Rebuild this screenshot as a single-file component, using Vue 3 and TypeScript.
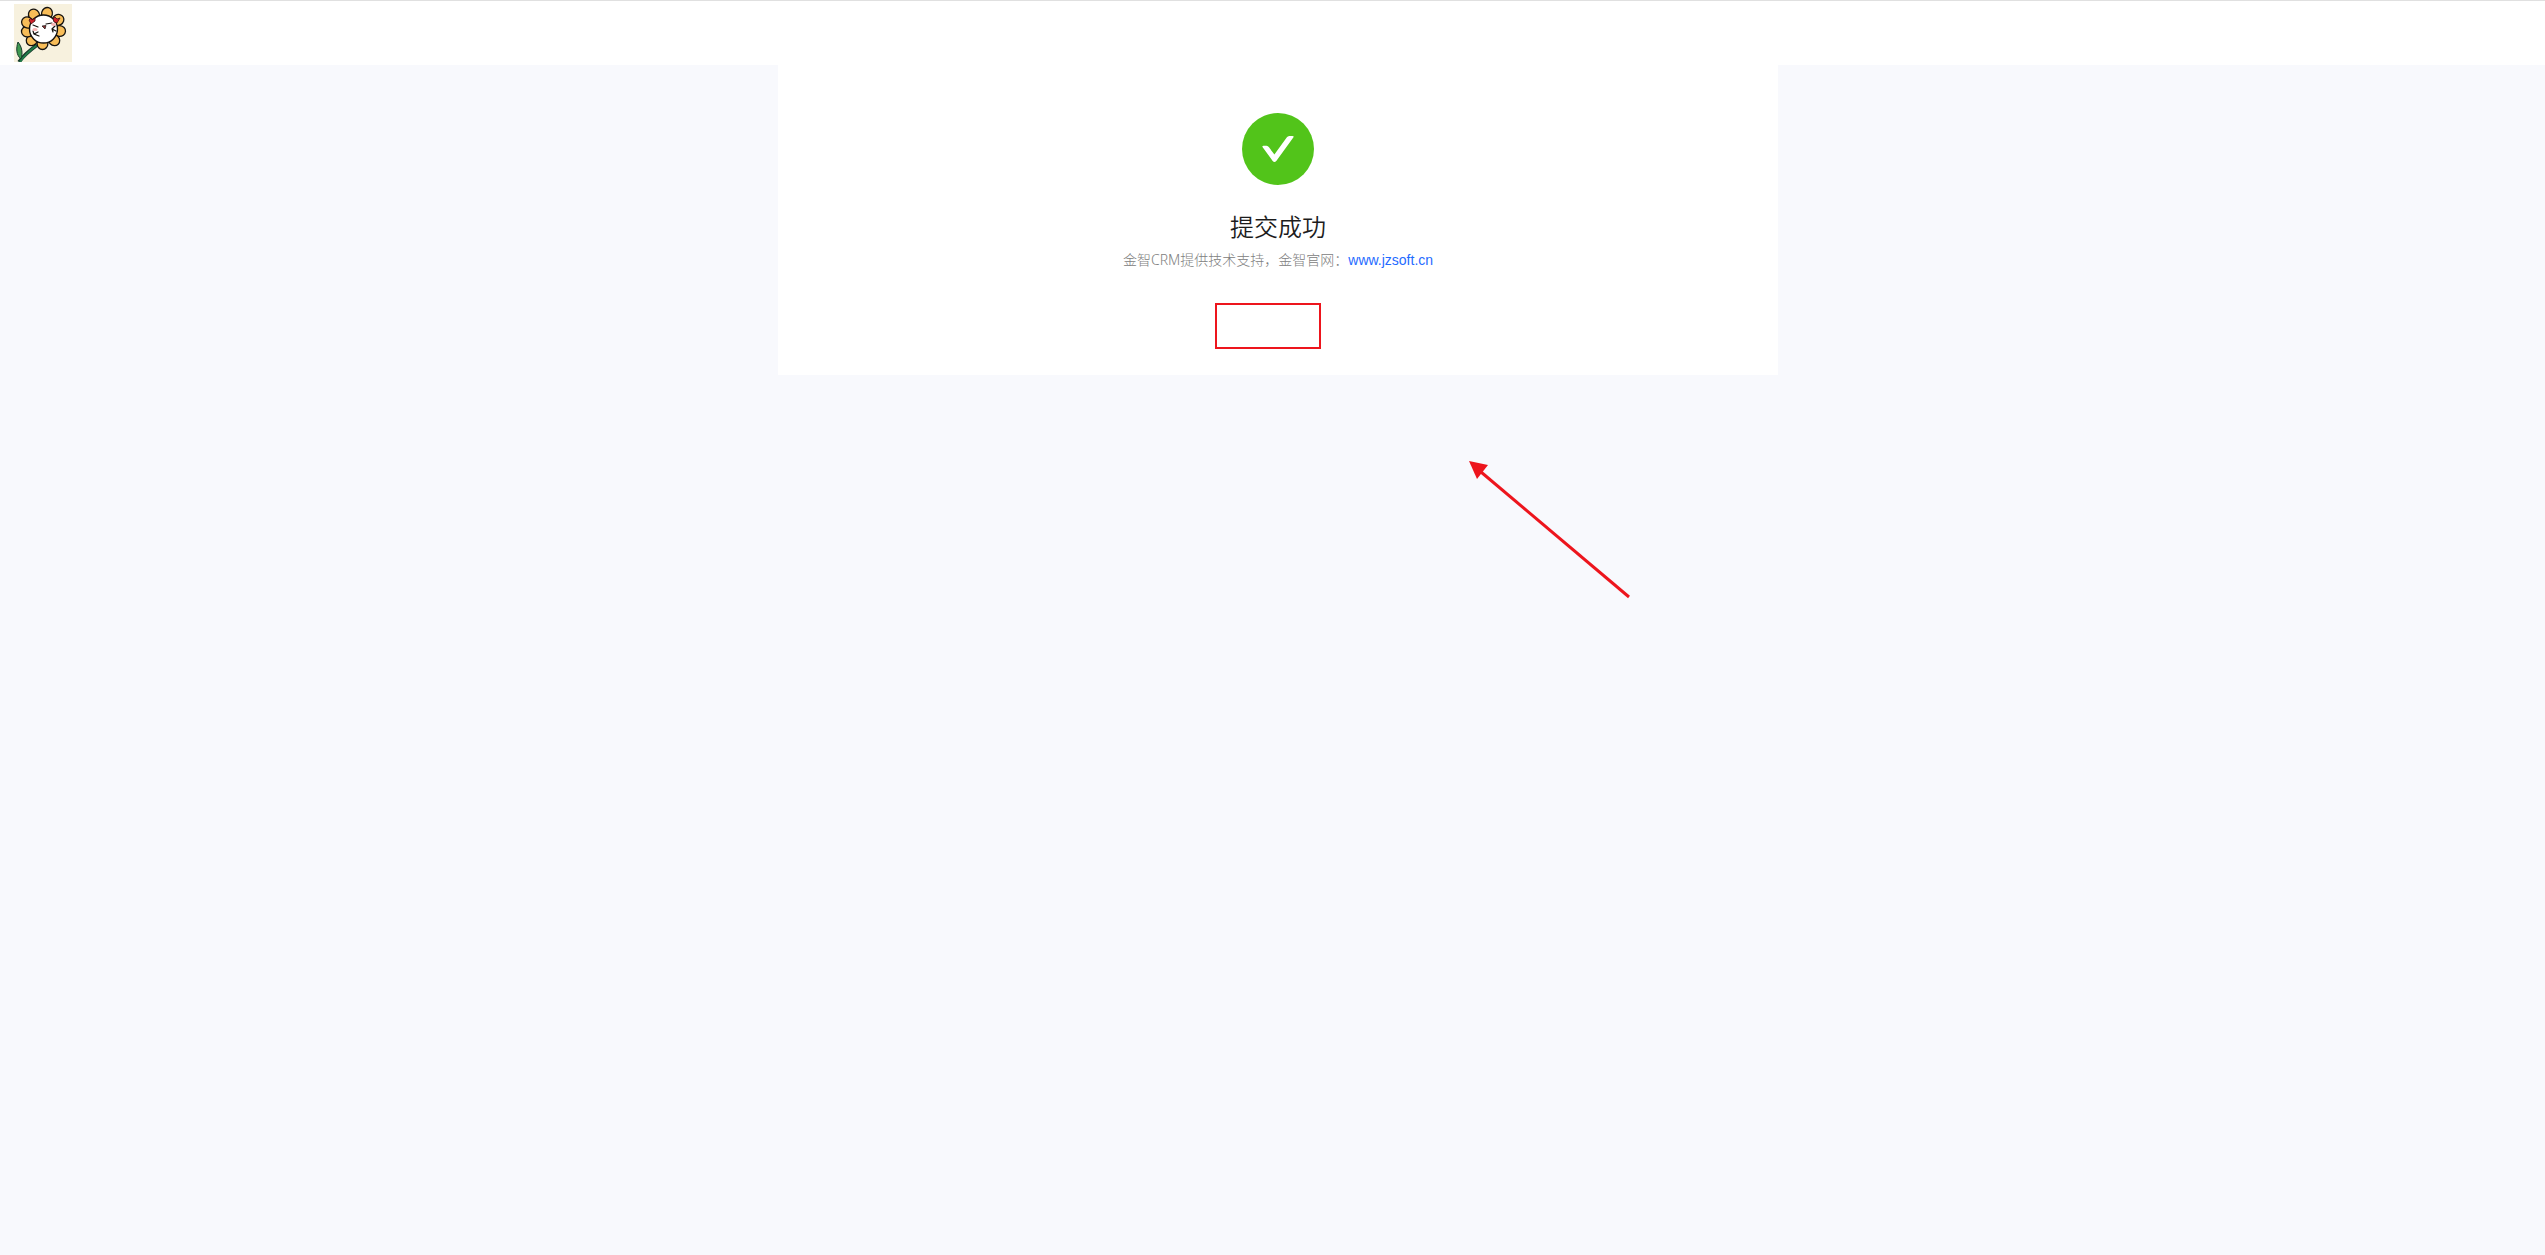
<script setup lang="ts">
interface Petal {
  x: number
  y: number
  angle: number
}

const petals: Petal[] = [
  { x: 20, y: 11, angle: -30 },
  { x: 33, y: 9.5, angle: 15 },
  { x: 44, y: 16, angle: 60 },
  { x: 45.5, y: 27, angle: 95 },
  { x: 40, y: 36, angle: 135 },
  { x: 28.5, y: 39.5, angle: 180 },
  { x: 18, y: 36, angle: 225 },
  { x: 13.5, y: 27.5, angle: 265 },
  { x: 13.5, y: 18.5, angle: 295 },
]

const title = '提交成功'
const support = '金智CRM提供技术支持，金智官网：'
const site = 'www.jzsoft.cn'
</script>

<template>
  <div class="page">
    <header class="topbar">
      <svg class="logo" viewBox="0 0 58 58" role="img" aria-label="logo">
        <rect width="58" height="58" fill="#f7f1de" />
        <path d="M23 41 C15 47 9 52 5 58" fill="none" stroke="#17382b" stroke-width="3.600" />
        <path d="M22.500 41.500 C15 47 10 52 6 58" fill="none" stroke="#1f7a48" stroke-width="2" />
        <path d="M4 38 C2 44 2 51 7 55 C9 49 8 43 4 38Z" fill="#3f9a50" stroke="#17382b" stroke-width="1" />
        <ellipse
          v-for="petal in petals"
          :key="petal.angle"
          :cx="petal.x"
          :cy="petal.y"
          rx="5.4"
          ry="6"
          :transform="`rotate(${petal.angle} ${petal.x} ${petal.y})`"
          fill="#f8bd58"
          stroke="#15120f"
          stroke-width="1.3"
        />
        <circle cx="29.500" cy="25" r="14" fill="#fff" stroke="#15120f" stroke-width="1.400" />
        <path d="M15 16 L17 14 L18 16 L21 14 L21 17 L17 20Z M39 15 L41 13 L43 15 L46 14 L43 19 L40 18Z" fill="#d0202b" stroke="#3b1012" stroke-width="0.800" />
        <path d="M19 21 L24 23 M19 27 L20 30 L25 32 M20 30 L24 28 M32 20 L38 19 M41 22 L38 25 L39 28 M38 25 L42 27" fill="none" stroke="#15120f" stroke-width="1.200" stroke-linecap="round" />
        <path d="M28 22 L32 21.500 L31 25Z" fill="#8e3036" stroke="#15120f" stroke-width="0.700" />
        <ellipse cx="21" cy="25.500" rx="2.600" ry="1.600" fill="#f9b6b6" />
        <ellipse cx="39.500" cy="20.500" rx="2.400" ry="1.400" fill="#f9b6b6" />
      </svg>
    </header>

    <main class="content">
      <section class="card">
        <svg class="success" viewBox="0 0 72 72" aria-hidden="true">
          <circle cx="36" cy="36" r="36" fill="#52c41a" />
          <path d="M20.500 34 Q20 32.800 21.500 32.800 L24.500 32.800 Q26 32.800 27 34.300 L32.400 41.600 L44.700 24.500 Q45.700 23 47.300 23 L50.500 23 Q52.300 23 51.300 24.500 L34.300 48 Q32.400 50 30.700 48 Z" fill="#fff" />
        </svg>
        <h1 class="title">{{ title }}</h1>
        <p class="subtitle">{{ support }}<a class="link" href="http://www.jzsoft.cn">{{ site }}</a></p>
        <div class="marker"></div>
        <svg class="arrow" viewBox="0 0 164 140" aria-hidden="true">
          <path d="M12 11 L160 136" stroke="#ed151d" stroke-width="3" />
          <path d="M0 0 L19 4 L8 18Z" fill="#ed151d" />
        </svg>
      </section>
    </main>
  </div>
</template>

<style>
body {
  margin: 0;
  background: #f8f9fd;
}
</style>

<style scoped>
.page {
  min-height: 100vh;
  background: #f8f9fd;
  font-family: "Noto Sans", "Noto Sans CJK SC", sans-serif;
}

.topbar {
  display: flex;
  align-items: center;
  box-sizing: border-box;
  height: 65px;
  padding: 0 14px;
  border-top: 1px solid #e0e0e0;
  background: #fff;
}

.logo {
  width: 58px;
  height: 58px;
}

.content {
  display: flex;
  justify-content: center;
  padding-left: 11px;
}

.card {
  position: relative;
  display: flex;
  flex-direction: column;
  align-items: center;
  box-sizing: border-box;
  width: 1000px;
  min-height: 310px;
  padding: 48px 32px;
  background: #fff;
}

.success {
  width: 72px;
  height: 72px;
}

.title {
  margin: 24px 0 0;
  color: #1c1c1c;
  font-size: 24px;
  font-weight: 350;
  line-height: 36px;
}

.subtitle {
  margin: 4px 0 0;
  color: #808080;
  font-size: 14px;
  font-weight: 300;
  line-height: 22px;
}

.link {
  color: #1f6bff;
  font-family: "Liberation Sans", Arial, sans-serif;
  font-weight: 400;
  text-decoration: none;
}

.marker {
  position: absolute;
  top: 238px;
  left: 437px;
  box-sizing: border-box;
  width: 106px;
  height: 46px;
  border: 2px solid #ed151d;
}

.arrow {
  position: absolute;
  top: 396px;
  left: 691px;
  width: 164px;
  height: 140px;
}
</style>
